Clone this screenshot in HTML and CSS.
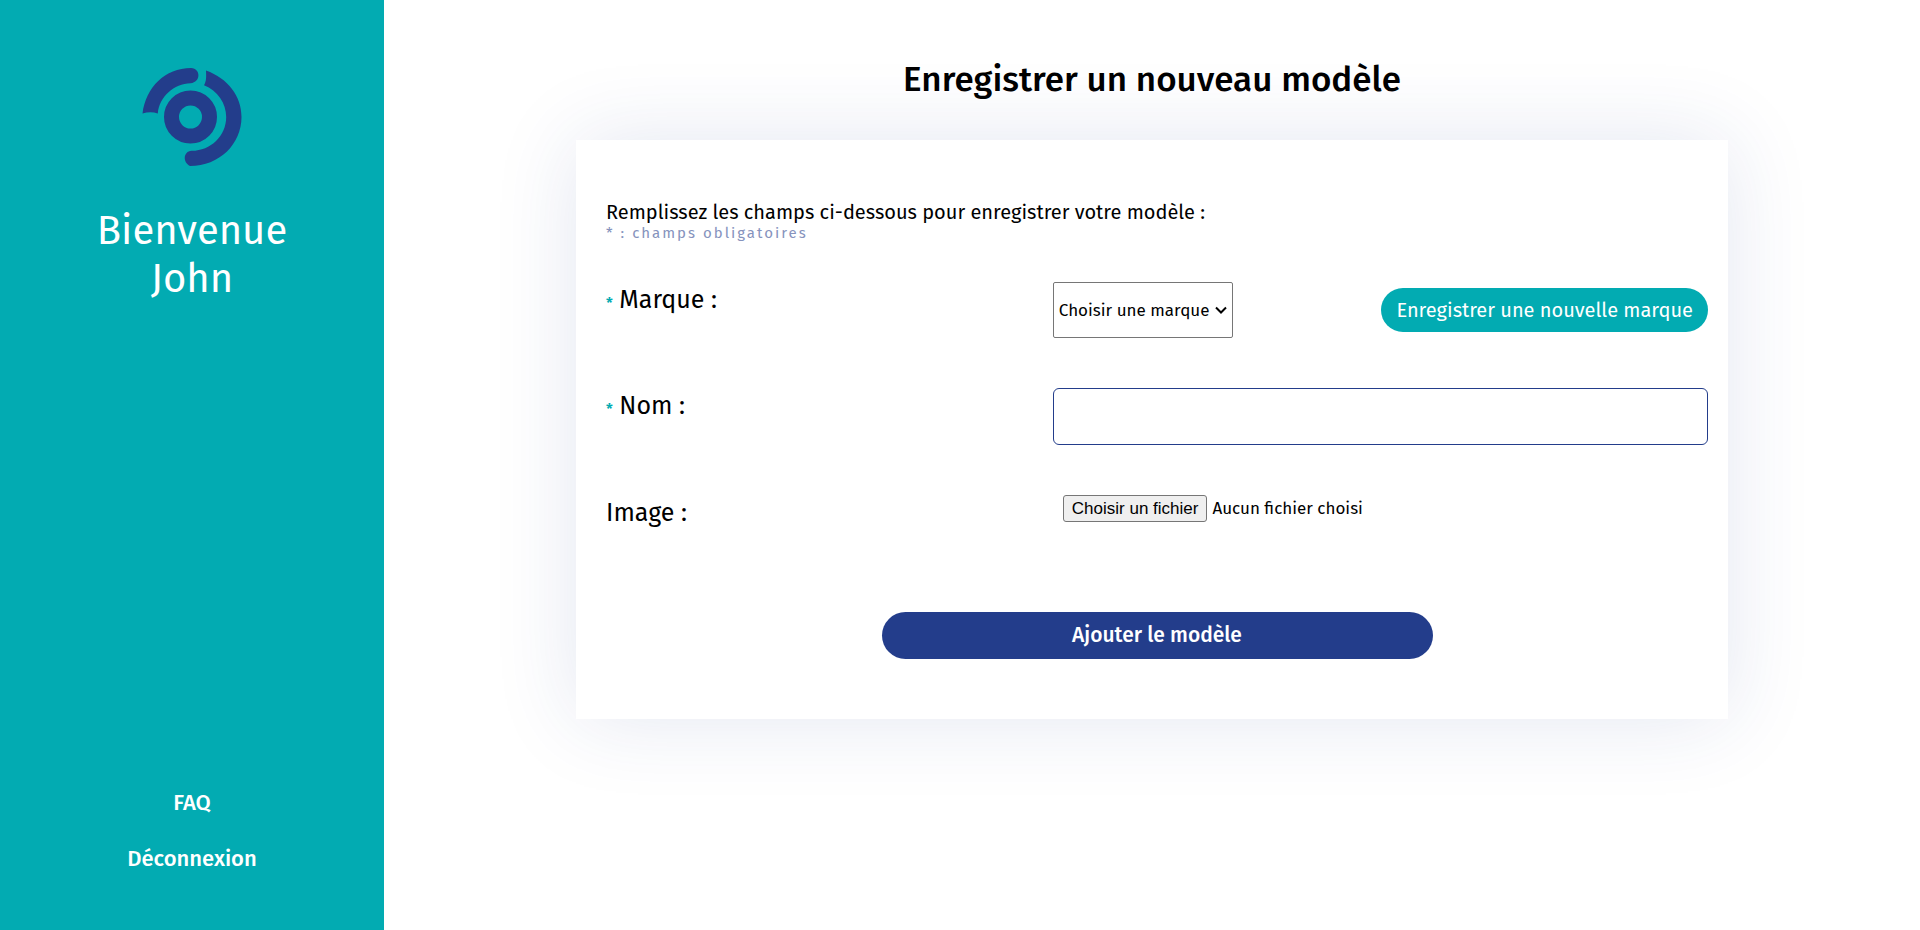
FILE: index.html
```html
<!DOCTYPE html>
<html lang="fr">
<head>
  <meta charset="utf-8">
  <meta name="viewport" content="width=device-width, initial-scale=1">
  <title>Enregistrer un nouveau modèle</title>
  <link rel="stylesheet" href="styles.css">
</head>
<body class="page">
  <aside class="sidebar">
    <svg class="logo" viewBox="0 0 100 100" aria-hidden="true">
      <circle class="logo-stroke" cx="48.500" cy="50" r="19"/>
      <path class="logo-fill" d="M0.500 46.500C4 20 23 1.200 49 1C59 1.500 59 15.500 48.500 16.200C32 17 17.500 29 15.800 46.500C11 44.800 6 44.800 .5 46.500Z"/>
      <path class="logo-fill" d="M64 3.500C86 11.500 99.500 29 99.500 50C99.500 77 77.500 99 48 99C40.500 95.500 41 84.500 49.500 83.800C68.500 84 84.200 69 84.200 50C84.200 36 75.500 23.500 62 18.200C64.500 14 64.300 10 64 3.500Z"/>
    </svg>
    <p class="welcome">Bienvenue<br>John</p>
    <nav class="side-nav">
      <a class="side-link" href="#faq">FAQ</a>
      <a class="side-link" href="#deconnexion">Déconnexion</a>
    </nav>
  </aside>
  <main class="main">
    <h1 class="title">Enregistrer un nouveau modèle</h1>
    <form class="card">
      <div class="intro">
        <p class="intro-text">Remplissez les champs ci-dessous pour enregistrer votre modèle :</p>
        <p class="intro-note">* : champs obligatoires</p>
      </div>
      <div class="row">
        <label class="label" for="brand"><span class="star">*</span> Marque :</label>
        <div class="brand">
          <select class="select" id="brand" required>
            <option value="">Choisir une marque</option>
          </select>
          <button class="new-brand" type="button">Enregistrer une nouvelle marque</button>
        </div>
      </div>
      <div class="row">
        <label class="label" for="name"><span class="star">*</span> Nom :</label>
        <input class="input" id="name" type="text" required>
      </div>
      <div class="row">
        <label class="label" for="image">Image :</label>
        <div class="file">
          <input class="file-input" id="image" type="file" accept="image/*">
          <label class="file-button" for="image">Choisir un fichier</label>
          <span class="file-name">Aucun fichier choisi</span>
        </div>
      </div>
      <button class="submit" type="submit">Ajouter le modèle</button>
    </form>
  </main>
</body>
</html>
```
FILE: styles.css
```css
:root {
  --teal: #02abb2;
  --blue: #233d8b;
  --font: "Fira Sans", "Noto Sans", sans-serif;
}

* {
  box-sizing: border-box;
}

.page {
  display: grid;
  grid-template-columns: 1fr 4fr;
  min-height: 100vh;
  margin: 0;
  font-family: var(--font);
  color: #000;
  background: #fff;
}

.sidebar {
  display: flex;
  flex-direction: column;
  align-items: center;
  padding: 67px 20px 57px;
  color: #fff;
  background: var(--teal);
}

.logo {
  width: 100px;
  height: 100px;
}

.logo-stroke {
  fill: none;
  stroke: var(--blue);
  stroke-width: 15;
}

.logo-fill {
  fill: var(--blue);
}

.welcome {
  margin: 40px 0 0;
  font-size: 40px;
  line-height: 48px;
  text-align: center;
}

.side-nav {
  display: flex;
  flex-direction: column;
  align-items: center;
  gap: 28px;
  margin-top: auto;
}

.side-link {
  font-size: 22px;
  line-height: 28px;
  font-weight: 500;
  color: #fff;
  text-decoration: none;
}

.main {
  display: flex;
  flex-direction: column;
  align-items: center;
  padding-top: 55px;
}

.title {
  margin: 0 0 37px;
  font-size: 35px;
  line-height: 48px;
  font-weight: 500;
}

.card {
  display: flex;
  flex-direction: column;
  gap: 50px;
  width: 75%;
  padding: 60px 20px 60px 30px;
  background: #fff;
  box-shadow: 0 0 80px rgba(35, 61, 139, 0.12);
}

.intro {
  margin-bottom: -10px;
}

.intro-text,
.intro-note {
  margin: 0;
}

.intro-text {
  font-size: 20px;
  line-height: 24px;
}

.intro-note {
  font-size: 15px;
  line-height: 18px;
  letter-spacing: 2px;
  color: #8693bd;
}

.row {
  display: grid;
  grid-template-columns: 2fr 3fr;
  column-gap: 10px;
  min-height: 56px;
  align-items: start;
}

.label {
  font-size: 25px;
  line-height: 36px;
}

.star {
  font-size: 15px;
  font-weight: 600;
  color: var(--teal);
}

.brand {
  display: flex;
  align-items: center;
  justify-content: space-between;
}

.select {
  height: 56px;
  padding: 0 22px 0 5px;
  border: 1px solid #767676;
  border-radius: 2px;
  appearance: none;
  font-family: var(--font);
  font-size: 17px;
  color: #000;
  background: #fff url("data:image/svg+xml,%3Csvg xmlns='http://www.w3.org/2000/svg' width='12' height='8' viewBox='0 0 12 8'%3E%3Cpath d='M1 1.500L6 6.500L11 1.500' fill='none' stroke='%23000' stroke-width='2'/%3E%3C/svg%3E") no-repeat right 5px center;
}

.new-brand,
.submit {
  border: 0;
  border-radius: 24px;
  font-family: var(--font);
  color: #fff;
}

.new-brand {
  padding: 10px 15px;
  font-size: 20px;
  line-height: 24px;
  background: var(--teal);
}

.input {
  width: 100%;
  height: 57px;
  padding: 0 10px;
  border: 1px solid var(--blue);
  border-radius: 6px;
  font-family: var(--font);
  font-size: 20px;
  background: #fff;
}

.file {
  display: flex;
  align-items: center;
  gap: 5px;
  padding-left: 10px;
}

.file-input {
  position: absolute;
  width: 1px;
  height: 1px;
  opacity: 0;
}

.file-button {
  padding: 2px 8px;
  border: 1px solid #767676;
  border-radius: 3px;
  font-family: "Liberation Sans", Arial, sans-serif;
  font-size: 17px;
  line-height: 21px;
  background: #efefef;
}

.file-name {
  font-size: 17px;
  line-height: 24px;
}

.submit {
  align-self: center;
  width: 50%;
  margin-top: 11px;
  padding: 10px 20px;
  font-size: 21px;
  line-height: 27px;
  font-weight: 500;
  background: var(--blue);
}
```
